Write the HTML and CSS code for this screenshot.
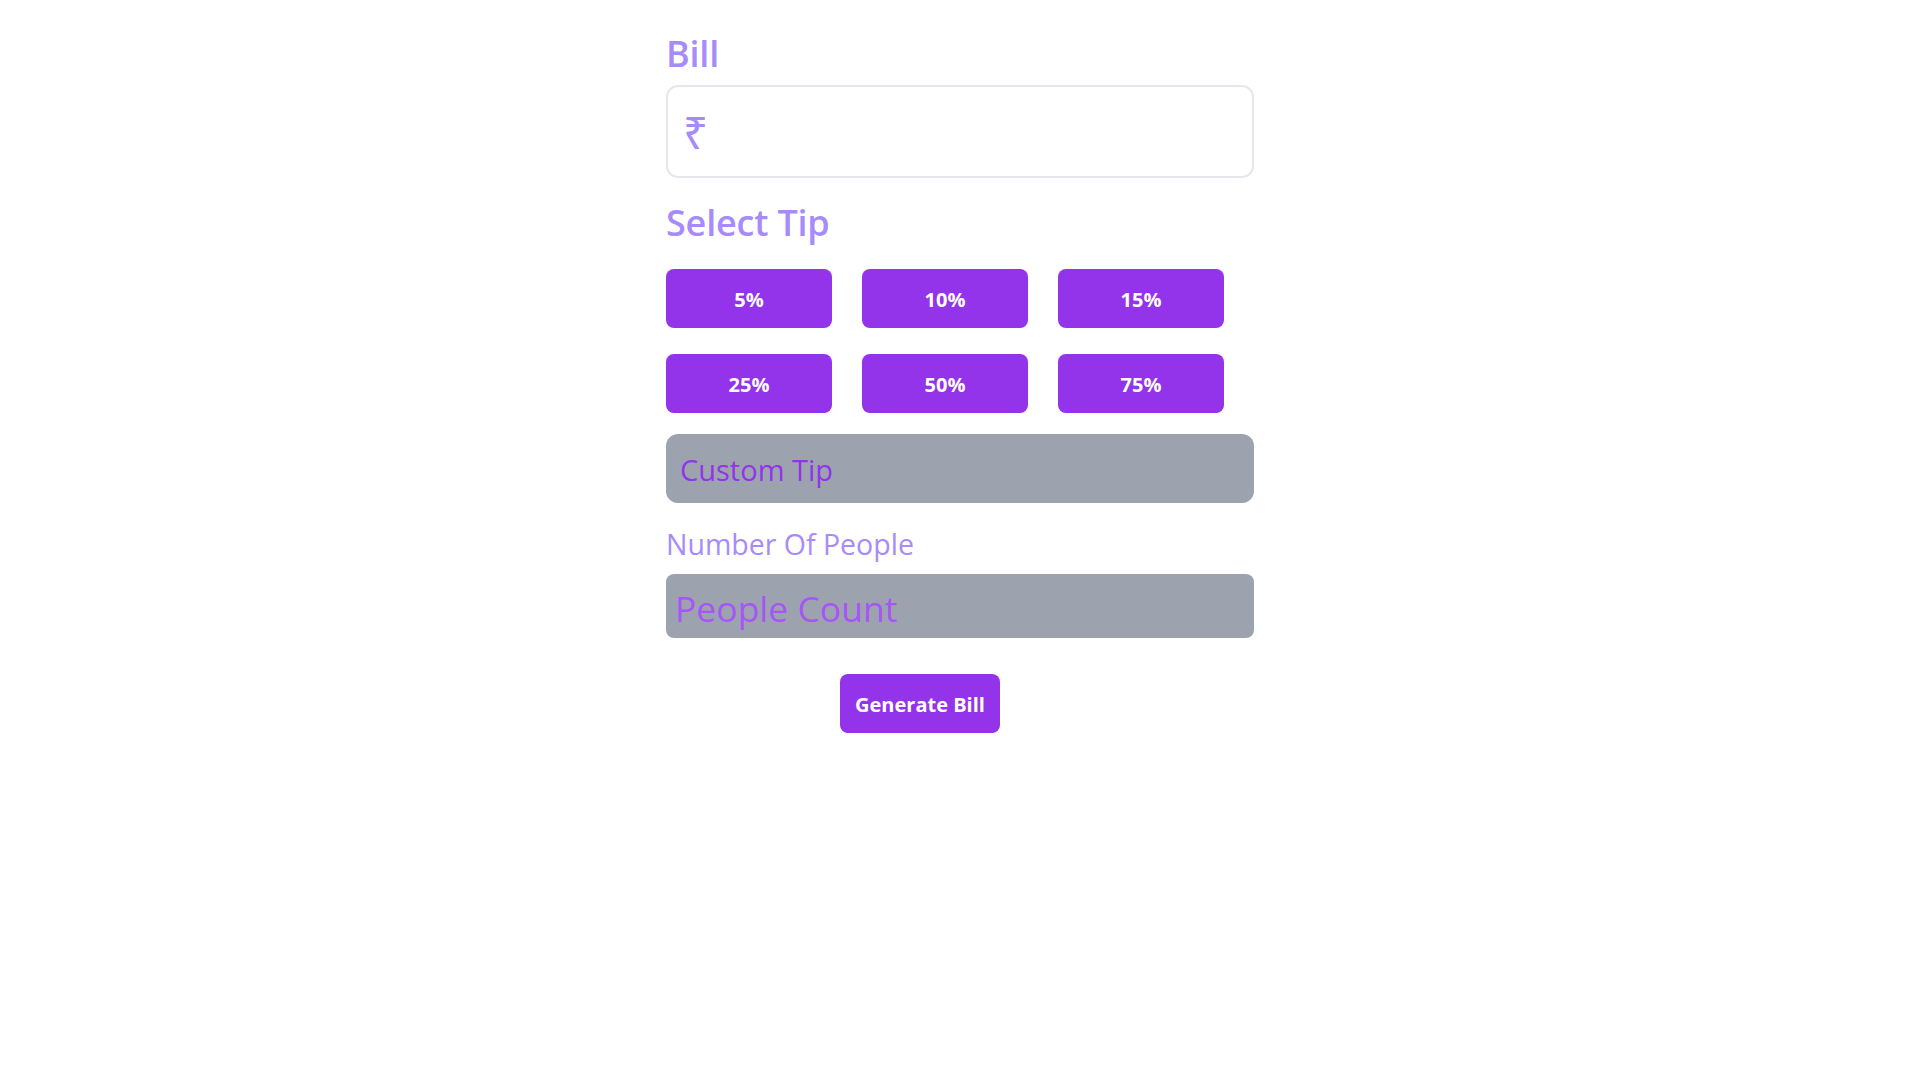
FILE: index.html
```html
<!DOCTYPE html>
<html lang="en">
<head>
<meta charset="utf-8">
<title>Tip Calculator</title>
<link rel="stylesheet" href="styles.css">
</head>
<body>
<main class="calc">
  <label class="heading">Bill</label>
  <div class="bill-box">
    <span class="rupee">₹</span>
    <input class="bill-input" type="text">
  </div>
  <label class="heading heading-tip">Select Tip</label>
  <div class="tips">
    <button class="tip">5%</button>
    <button class="tip">10%</button>
    <button class="tip">15%</button>
    <button class="tip">25%</button>
    <button class="tip">50%</button>
    <button class="tip">75%</button>
  </div>
  <input class="custom" type="text" placeholder="Custom Tip">
  <label class="people-label">Number Of People</label>
  <input class="people" type="text" placeholder="People Count">
  <div class="actions">
    <button class="generate">Generate Bill</button>
  </div>
</main>
</body>
</html>
```
FILE: styles.css
```css
* { box-sizing: border-box; }
html, body { margin: 0; padding: 0; background: #ffffff; }
body { font-family: "Open Sans", "Noto Sans", sans-serif; }

.calc {
  width: 588px;
  margin: 0 auto;
  padding-top: 34px;
  display: flex;
  flex-direction: column;
}

.heading {
  font-size: 36px;
  line-height: 40px;
  font-weight: 600;
  color: #a78bfa;
  letter-spacing: -0.2px;
}

.bill-box {
  margin-top: 11px;
  height: 93px;
  border: 2px solid #e5e7eb;
  border-radius: 12px;
  display: flex;
  align-items: center;
  padding: 0 15px;
}
.rupee {
  font-family: "Noto Sans", "DejaVu Sans", sans-serif;
  font-size: 44px;
  color: #a78bfa;
  line-height: 1;
}
.bill-input {
  flex: 1;
  border: none;
  outline: none;
  height: 100%;
  background: transparent;
  font-size: 28px;
  font-family: inherit;
}

.heading-tip { margin-top: 25px; }

.tips {
  margin-top: 26px;
  display: grid;
  grid-template-columns: repeat(3, 166px);
  column-gap: 30px;
  row-gap: 26px;
}
.tip {
  height: 59px;
  border: none;
  border-radius: 8px;
  background: #9333ea;
  color: #ffffff;
  font-family: inherit;
  font-size: 20px;
  font-weight: 700;
  padding: 2px 0 0;
}

.custom {
  margin-top: 21px;
  height: 69px;
  border: none;
  border-radius: 12px;
  background: #9ca3af;
  padding: 2px 14px 0;
  font-family: inherit;
  font-size: 29px;
  color: #9333ea;
  outline: none;
}
.custom::placeholder { color: #9333ea; opacity: 1; }

.people-label {
  margin-top: 25px;
  font-size: 28.5px;
  line-height: 32px;
  color: #a78bfa;
}

.people {
  margin-top: 14px;
  height: 64px;
  border: none;
  border-radius: 8px;
  background: #9ca3af;
  padding: 3px 9px 0;
  font-family: inherit;
  font-size: 35.5px;
  color: #a855f7;
  outline: none;
}
.people::placeholder { color: #a855f7; opacity: 1; }

.actions {
  margin-top: 36px;
  display: flex;
  padding-left: 174px;
}
.generate {
  width: 160px;
  height: 59px;
  border: none;
  border-radius: 8px;
  background: #9333ea;
  color: #ffffff;
  font-family: inherit;
  font-size: 20px;
  font-weight: 700;
  padding: 2px 0 0;
}
```
